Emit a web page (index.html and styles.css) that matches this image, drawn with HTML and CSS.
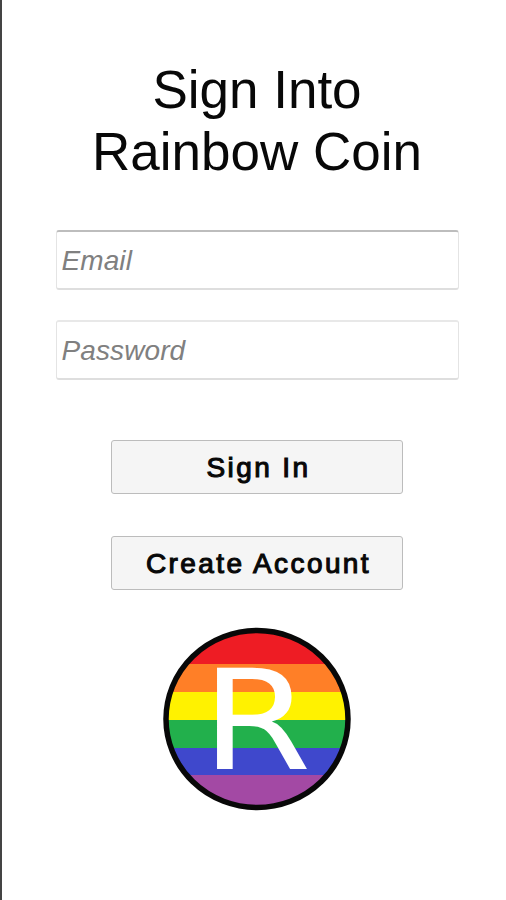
FILE: index.html
```html
<!DOCTYPE html>
<html lang="en">
<head>
<meta charset="utf-8">
<title>Rainbow Coin</title>
<link rel="stylesheet" href="styles.css">
</head>
<body>
<main class="screen">
<h1 class="title">Sign Into<br>Rainbow Coin</h1>
<form class="form">
<input class="field field-email" type="email" placeholder="Email" aria-label="Email">
<input class="field" type="password" placeholder="Password" aria-label="Password">
<button class="button button-first" type="button">Sign In</button>
<button class="button" type="button">Create Account</button>
</form>
<svg class="coin" viewBox="0 0 188 184" role="img">
<defs><clipPath id="disc"><ellipse cx="94" cy="92" rx="91" ry="89"/></clipPath></defs>
<g clip-path="url(#disc)">
<rect width="188" height="37" fill="#ee1c24"/>
<rect y="37" width="188" height="28" fill="#ff7f27"/>
<rect y="65" width="188" height="28" fill="#fff200"/>
<rect y="93" width="188" height="28" fill="#22b04c"/>
<rect y="121" width="188" height="27" fill="#3f48cc"/>
<rect y="148" width="188" height="36" fill="#a349a4"/>
</g>
<ellipse cx="94" cy="92" rx="91" ry="88.5" fill="none" stroke="#080808" stroke-width="5.5"/>
<text class="coin-letter" x="38.5" y="142" textLength="110" lengthAdjust="spacingAndGlyphs">R</text>
</svg>
</main>
</body>
</html>
```
FILE: styles.css
```css
* { box-sizing: border-box; }
body { margin: 0; background: #fff; font-family: "Liberation Sans", Arial, sans-serif; }
.screen { display: flex; flex-direction: column; align-items: center; height: 900px; padding: 59px 0 0 6px; border-left: 2px solid #444; overflow: hidden; }
.title { margin: 0; font-size: 53px; font-weight: 400; line-height: 62px; text-align: center; color: #080808; }
.form { display: flex; flex-direction: column; align-items: center; margin-top: 47px; }
.field { width: 403px; height: 60px; margin: 0 0 30px; padding: 2px 5px 0; border: 1px solid #e4e4e4; border-top: 2px solid #e8e8e8; border-bottom: 2px solid #dedede; border-radius: 3px; background: #fff; font: italic 28px "Liberation Sans", Arial, sans-serif; letter-spacing: 0.1px; }
.field-email { border-top-color: #bdbdbd; }
.field::placeholder { color: #808080; opacity: 1; }
.button { width: 292px; height: 54px; margin: 0 0 42px; padding: 2px 0 0 3px; border: 1px solid #bcbcbc; border-radius: 3px; background: #f5f5f5; color: #080808; font: 28px "Liberation Sans", Arial, sans-serif; letter-spacing: 2.4px; -webkit-text-stroke: 1.1px #080808; }
.button-first { margin-top: 30px; }
.coin { width: 188px; height: 184px; margin-top: -5px; flex: none; }
.coin-letter { font: 138.5px "DejaVu Sans", sans-serif; fill: #fff; }
```
